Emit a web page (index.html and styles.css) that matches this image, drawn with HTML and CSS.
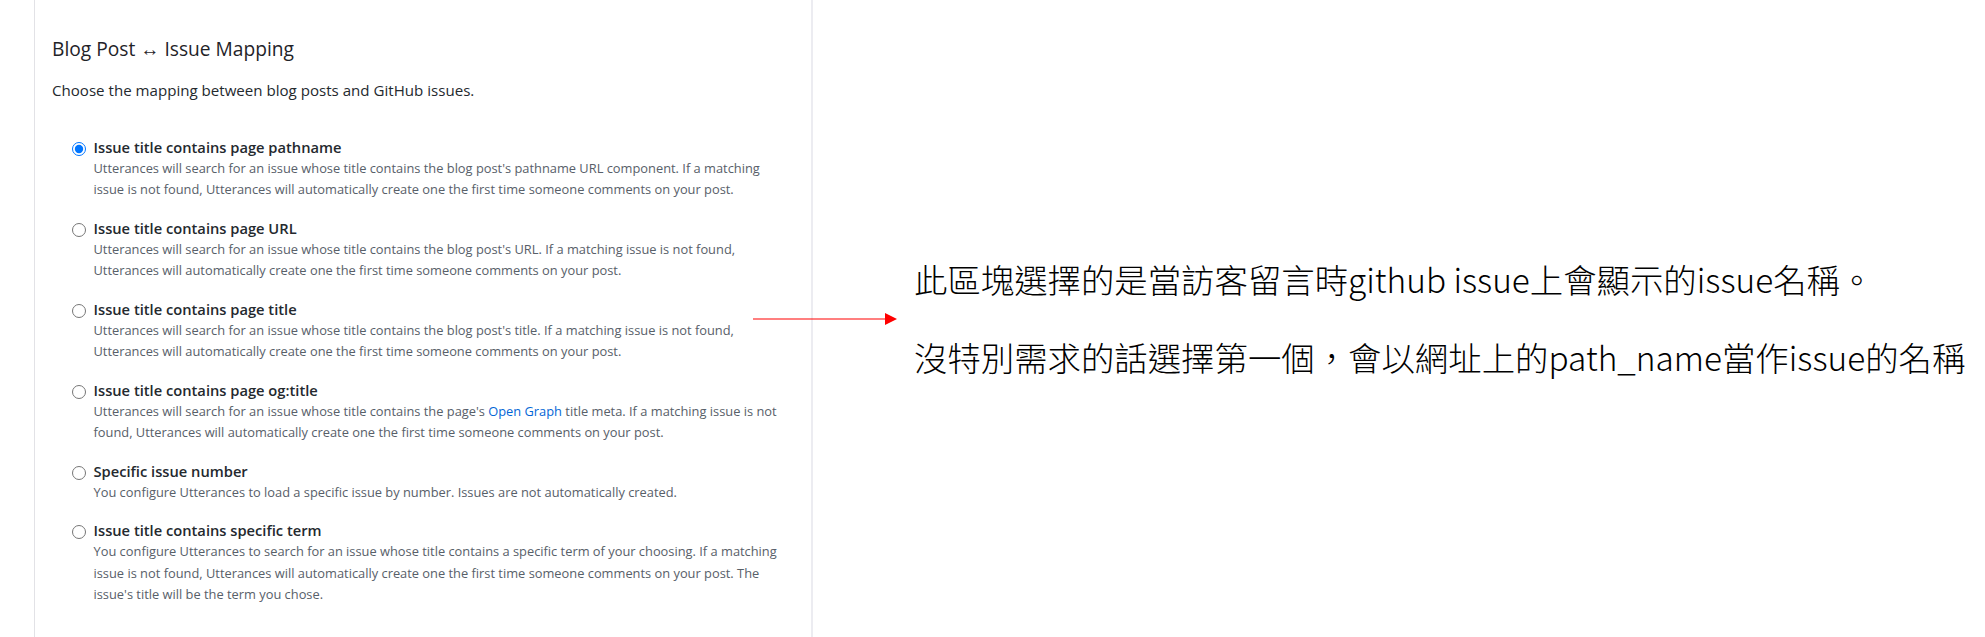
FILE: index.html
```html
<!DOCTYPE html>
<html lang="zh-Hant">
<head>
<meta charset="utf-8">
<title>Blog Post ↔ Issue Mapping</title>
<link rel="stylesheet" href="styles.css">
</head>
<body>
<div class="page">
  <section class="panel">
    <h3 class="title">Blog Post ↔ Issue Mapping</h3>
    <p class="intro">Choose the mapping between blog posts and GitHub issues.</p>
    <div class="options">
      <label class="option">
        <input class="radio" type="radio" name="mapping" checked>
        <span class="label">Issue title contains page pathname</span>
        <span class="note">Utterances will search for an issue whose title contains the blog post's pathname URL component. If a matching issue is not found, Utterances will automatically create one the first time someone comments on your post.</span>
      </label>
      <label class="option">
        <input class="radio" type="radio" name="mapping">
        <span class="label">Issue title contains page URL</span>
        <span class="note">Utterances will search for an issue whose title contains the blog post's URL. If a matching issue is not found, Utterances will automatically create one the first time someone comments on your post.</span>
      </label>
      <label class="option">
        <input class="radio" type="radio" name="mapping">
        <span class="label">Issue title contains page title</span>
        <span class="note">Utterances will search for an issue whose title contains the blog post's title. If a matching issue is not found, Utterances will automatically create one the first time someone comments on your post.</span>
      </label>
      <label class="option">
        <input class="radio" type="radio" name="mapping">
        <span class="label">Issue title contains page og:title</span>
        <span class="note">Utterances will search for an issue whose title contains the page's <a class="link" href="#">Open Graph</a> title meta. If a matching issue is not found, Utterances will automatically create one the first time someone comments on your post.</span>
      </label>
      <label class="option">
        <input class="radio" type="radio" name="mapping">
        <span class="label">Specific issue number</span>
        <span class="note">You configure Utterances to load a specific issue by number. Issues are not automatically created.</span>
      </label>
      <label class="option">
        <input class="radio" type="radio" name="mapping">
        <span class="label">Issue title contains specific term</span>
        <span class="note">You configure Utterances to search for an issue whose title contains a specific term of your choosing. If a matching issue is not found, Utterances will automatically create one the first time someone comments on your post. The issue's title will be the term you chose.</span>
      </label>
    </div>
  </section>
  <aside class="remarks">
    <p class="remark">此區塊選擇的是當訪客留言時github issue上會顯示的issue名稱。</p>
    <p class="remark">沒特別需求的話選擇第一個，會以網址上的path_name當作issue的名稱</p>
  </aside>
  <svg class="arrow" width="145" height="12" viewBox="0 0 145 12" aria-hidden="true">
    <line x1="0" y1="6" x2="134" y2="6" stroke="#ff0000" stroke-width="1.2"/>
    <polygon points="132,0 144,6 132,12" fill="#ff0000"/>
  </svg>
</div>
</body>
</html>
```

FILE: styles.css
```css
html, body {
  margin: 0;
  padding: 0;
  background: #ffffff;
}

.page {
  position: relative;
  display: flex;
  align-items: stretch;
  min-height: 637px;
}

.panel {
  box-sizing: border-box;
  width: 779px;
  margin-left: 34px;
  padding: 36px 26px 0 17px;
  border-left: 1px solid #e2e2e6;
  border-right: 2px solid #ececf1;
  font-family: "Open Sans", "Noto Sans", sans-serif;
  color: #24292e;
}

.title {
  margin: 0;
  font-size: 19.2px;
  line-height: 26px;
  font-weight: 400;
  color: #1f2328;
}

.intro {
  margin: 17.5px 0 0;
  font-size: 15.1px;
  line-height: 20px;
  color: #24292e;
}

.options {
  display: flex;
  flex-direction: column;
  gap: 17px;
  margin-top: 37px;
  padding-left: 19.5px;
}

.option {
  display: grid;
  grid-template-columns: 14px 1fr;
  column-gap: 8px;
  align-items: start;
  cursor: pointer;
}

.radio {
  grid-row: 1;
  grid-column: 1;
  width: 14px;
  height: 14px;
  margin: 5px 0 0;
}

.label {
  grid-row: 1;
  grid-column: 2;
  font-size: 14.7px;
  line-height: 20px;
  font-weight: 600;
  color: #24292e;
}

.note {
  grid-row: 2;
  grid-column: 2;
  margin-top: 1px;
  max-width: 690px;
  font-size: 12.85px;
  line-height: 21.5px;
  color: #586069;
}

.link {
  color: #0366d6;
  text-decoration: none;
}

.remarks {
  display: flex;
  flex-direction: column;
  gap: 30px;
  margin-left: 101px;
  padding-top: 255px;
  font-family: "Noto Sans CJK TC", "Noto Sans", sans-serif;
  font-size: 33.4px;
  line-height: 48px;
  font-weight: 300;
  color: #000000;
}

.remark {
  margin: 0;
  white-space: nowrap;
}

.arrow {
  position: absolute;
  left: 753px;
  top: 313px;
}
```
